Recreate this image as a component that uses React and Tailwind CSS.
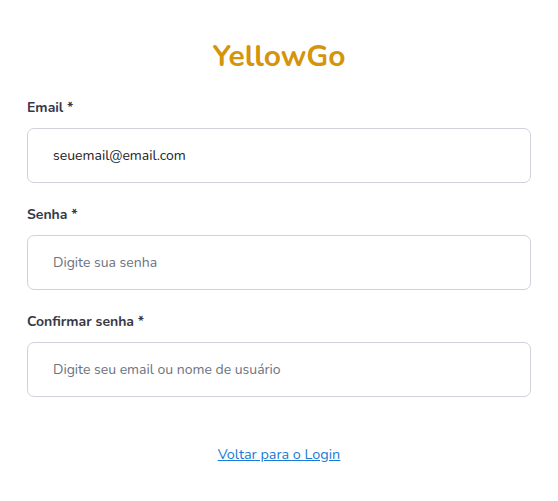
export default function App() {
  const font = { fontFamily: '"Nunito", "Lato", "Noto Sans", sans-serif' };
  return (
    <div className="min-h-[501px] w-full bg-white" style={font}>
      <div className="flex flex-col px-[27px] pt-[39px]">
        <h1 className="text-center text-[30px] font-bold leading-[36px] text-[#d4940b]">YellowGo</h1>
        <div className="mt-[23px] flex flex-col">
          <label className="text-[14px] font-bold leading-[20px] text-[#363848]">Email *</label>
          <div className="mt-[10px] flex h-[55px] items-center rounded-[7px] border border-[#cfd2d8] px-[25px] text-[14px] text-[#222]">
            seuemail@email.com
          </div>
        </div>
        <div className="mt-[22px] flex flex-col">
          <label className="text-[14px] font-bold leading-[20px] text-[#363848]">Senha *</label>
          <div className="mt-[10px] flex h-[55px] items-center rounded-[7px] border border-[#cfd2d8] px-[25px] text-[14px] text-[#6b7280]">
            Digite sua senha
          </div>
        </div>
        <div className="mt-[22px] flex flex-col">
          <label className="text-[14px] font-bold leading-[20px] text-[#363848]">Confirmar senha *</label>
          <div className="mt-[10px] flex h-[55px] items-center rounded-[7px] border border-[#cfd2d8] px-[25px] text-[14px] text-[#6b7280]">
            Digite seu email ou nome de usuário
          </div>
        </div>
        <div className="mt-[45px] text-center">
          <a href="#" className="text-[14.4px] leading-[20px] text-[#1a7bd6] underline">Voltar para o Login</a>
        </div>
      </div>
    </div>
  );
}
